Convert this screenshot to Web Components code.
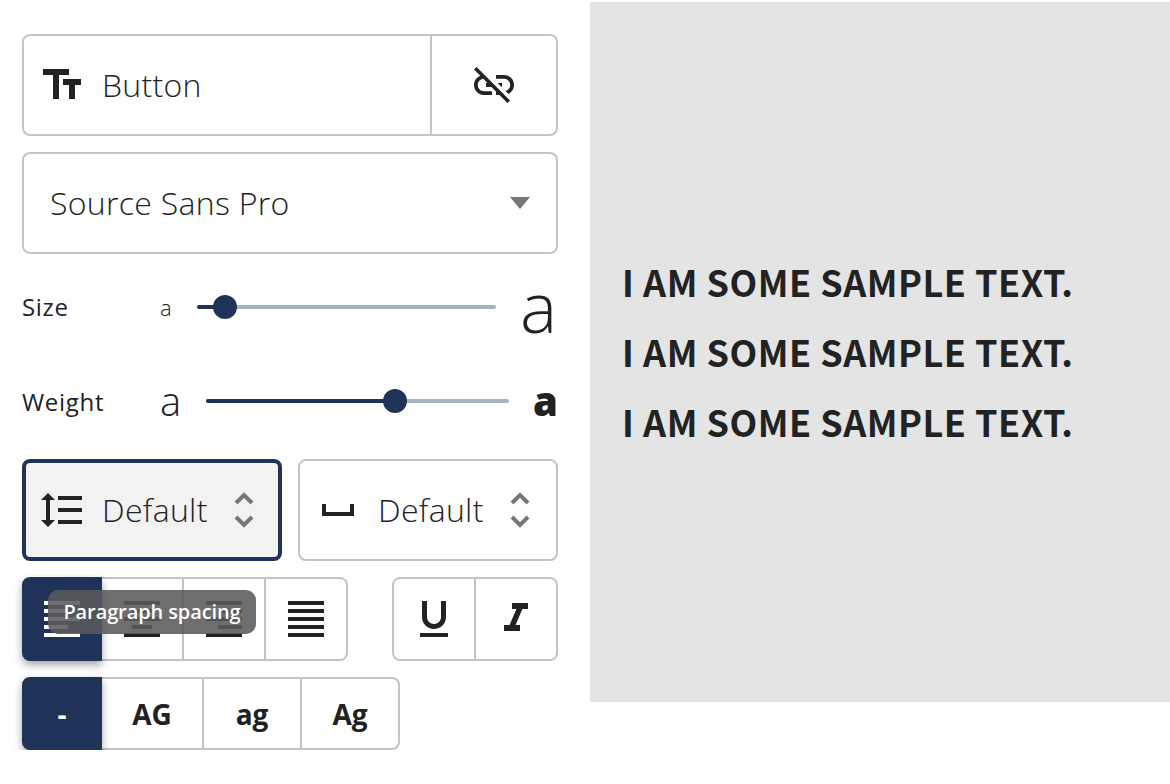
<!DOCTYPE html>
<html>
<head>
<meta charset="utf-8">
<title>Text settings</title>
<style>
    html, body { margin: 0; background: #fff; }
    body {
        display: flex;
        align-items: flex-start;
        font-family: "Open Sans", "Liberation Sans", sans-serif;
        color: #222;
    }
</style>
</head>
<body>
<text-panel>
    <field-row height="102">
        <field-cell grow>
            <line-icon name="text" slot="icon"></line-icon>
            Button
        </field-cell>
        <field-cell width="124" center>
            <line-icon name="unlink" slot="icon"></line-icon>
        </field-cell>
    </field-row>

    <font-select>Source Sans Pro</font-select>

    <range-row label="Size" left="37" right="62" value="9.4" height="74">
        <span slot="min" style="font-size:22px;font-weight:300">a</span>
        <span slot="max" style="display:block;font-size:70px;font-weight:300;line-height:68px;margin:0 1px 3px 0">a</span>
    </range-row>
    <range-row label="Weight" left="46" right="49" value="62.4" height="82" style="margin-bottom:1px;--label-lift:0px">
        <span slot="min" style="font-size:40px;font-weight:300">a</span>
        <span slot="max" style="font-size:40px;font-weight:800">a</span>
    </range-row>

    <div style="display:flex;gap:16px">
        <step-field focused>
            <line-icon name="lineheight" slot="icon"></line-icon>
            Default
        </step-field>
        <step-field>
            <line-icon name="space" slot="icon"></line-icon>
            Default
        </step-field>
    </div>

    <div style="display:flex;justify-content:space-between">
        <toggle-group height="84">
            <toggle-btn width="80" active><line-icon name="left"></line-icon></toggle-btn>
            <toggle-btn width="82"><line-icon name="center"></line-icon></toggle-btn>
            <toggle-btn width="82"><line-icon name="right"></line-icon></toggle-btn>
            <toggle-btn width="82"><line-icon name="justify"></line-icon></toggle-btn>
            <hint-bubble>Paragraph spacing</hint-bubble>
        </toggle-group>
        <toggle-group height="84">
            <toggle-btn width="84"><line-icon name="underline"></line-icon></toggle-btn>
            <toggle-btn width="82"><line-icon name="italic"></line-icon></toggle-btn>
        </toggle-group>
    </div>

    <toggle-group height="73">
        <toggle-btn width="80" active>-</toggle-btn>
        <toggle-btn width="102">AG</toggle-btn>
        <toggle-btn width="98">ag</toggle-btn>
        <toggle-btn width="98">Ag</toggle-btn>
    </toggle-group>
</text-panel>

<sample-preview>
    <div>I AM SOME SAMPLE TEXT.</div>
    <div>I AM SOME SAMPLE TEXT.</div>
    <div>I AM SOME SAMPLE TEXT.</div>
</sample-preview>

<script>
(function (){
    const BORDER = "#c4c4c4";
    const NAVY = "#1e3357";

    const ICONS = {
        text: "M2.5 4v3h5v12h3V7h5V4h-13zm19 5h-9v3h3v7h3v-7h3V9z",
        unlink: "M17 7h-4v1.9h4c1.71 0 3.1 1.39 3.1 3.1 0 1.43-.98 2.63-2.31 2.98l1.46 1.46C20.88 15.61 22 13.95 22 12c0-2.76-2.24-5-5-5zm-1 4h-2.19l2 2H16zM2 4.27l3.11 3.11C3.29 8.12 2 9.91 2 12c0 2.76 2.24 5 5 5h4v-1.9H7c-1.71 0-3.1-1.39-3.1-3.1 0-1.59 1.21-2.9 2.76-3.07L8.73 11H8v2h2.73L13 15.27V17h1.73l4.01 4L20 19.74 3.27 3 2 4.27z",
        lineheight: "M6 7h2.5L5 3.5 1.5 7H4v10H1.5L5 20.5 8.5 17H6V7zm4-2v2h12V5H10zm0 14h12v-2H10v2zm0-6h12v-2H10v2z",
        space: "M18 9v4H6V9H4v6h16V9z",
        left: "M15 15H3v2h12v-2zm0-8H3v2h12V7zM3 13h18v-2H3v2zm0 8h18v-2H3v2zM3 3v2h18V3H3z",
        center: "M7 15v2h10v-2H7zm-4 6h18v-2H3v2zm0-8h18v-2H3v2zm4-6v2h10V7H7zM3 3v2h18V3H3z",
        right: "M3 21h18v-2H3v2zm6-4h12v-2H9v2zm-6-4h18v-2H3v2zm6-4h12V7H9v2zM3 3v2h18V3H3z",
        justify: "M3 21h18v-2H3v2zm0-4h18v-2H3v2zm0-4h18v-2H3v2zm0-4h18V7H3v2zm0-6v2h18V3H3z",
        underline: "M12 17c3.31 0 6-2.69 6-6V3h-2.5v8c0 1.93-1.57 3.5-3.5 3.5S8.5 12.93 8.5 11V3H6v8c0 3.31 2.69 6 6 6zm-7 2v2h14v-2H5z",
        italic: "M10 4v3h2.21l-3.42 8H6v3h8v-3h-2.21l3.42-8H18V4z"
    };

    function define(name, markup, extra) {
        const template = document.createElement("template");
        template.innerHTML = markup;
        class Element extends HTMLElement {
            constructor() {
                super();
                this.attachShadow({ mode: "open" });
                this.shadowRoot.appendChild(template.content.cloneNode(true));
            }
            connectedCallback() {
                if(extra) extra.call(this);
            }
        }
        customElements.define(name, Element);
    }

    define("text-panel", `
    <style>
        :host {
            display: flex;
            flex-direction: column;
            gap: 16px;
            width: 536px;
            margin: 34px 0 0 22px;
            flex: none;
        }
    </style>
    <slot></slot>`);

    define("line-icon", `
    <style>
        :host { display: block; width: 48px; height: 48px; flex: none; }
        svg { display: block; width: 48px; height: 48px; fill: currentColor; }
    </style>
    <svg viewBox="0 0 24 24"><path></path></svg>`, function () {
        this.shadowRoot.querySelector("path").setAttribute("d", ICONS[this.getAttribute("name")]);
    });

    define("field-row", `
    <style>
        :host {
            display: flex;
            box-sizing: border-box;
            border: 2px solid ${BORDER};
            border-radius: 8px;
            background: #fff;
        }
    </style>
    <slot></slot>`, function () {
        this.style.height = this.getAttribute("height") + "px";
    });

    define("field-cell", `
    <style>
        :host {
            display: flex;
            align-items: center;
            box-sizing: border-box;
            font-size: 32px;
            font-weight: 300;
            letter-spacing: .3px;
            padding-left: 14px;
        }
        :host([grow]) { flex: 1; border-right: 2px solid ${BORDER}; }
        :host([center]) { justify-content: center; padding-left: 0; }
        slot[name="icon"]::slotted(*) { margin-right: 16px; }
        :host([center]) slot[name="icon"]::slotted(*) { margin-right: 0; }
        .label { margin-bottom: 2px; }
    </style>
    <slot name="icon"></slot><span class="label"><slot></slot></span>`, function () {
        if(this.hasAttribute("width")) this.style.width = this.getAttribute("width") + "px";
    });

    define("font-select", `
    <style>
        :host {
            display: flex;
            align-items: center;
            justify-content: space-between;
            box-sizing: border-box;
            height: 102px;
            padding: 0 26px;
            border: 2px solid ${BORDER};
            border-radius: 8px;
            font-size: 32px;
            font-weight: 300;
            letter-spacing: .3px;
        }
        .label { margin-bottom: 2px; }
        .caret {
            width: 0;
            height: 0;
            border-left: 10px solid transparent;
            border-right: 10px solid transparent;
            border-top: 12px solid #777;
        }
    </style>
    <span class="label"><slot></slot></span><span class="caret"></span>`);

    define("range-row", `
    <style>
        :host {
            display: grid;
            align-items: center;
            font-size: 24px;
        }
        .label { font-size: 24px; letter-spacing: .7px; margin-bottom: var(--label-lift, 2px); }
        .min { line-height: 1; }
        .max { text-align: right; line-height: 1; }
        .track {
            position: relative;
            height: 4px;
            border-radius: 2px;
            background: #a8b1c1;
        }
        .fill {
            height: 100%;
            border-radius: 2px;
            background: ${NAVY};
        }
        .thumb {
            position: absolute;
            top: -10px;
            width: 24px;
            height: 24px;
            margin-left: -12px;
            border-radius: 50%;
            background: ${NAVY};
        }
    </style>
    <span class="label"></span>
    <span class="min"><slot name="min"></slot></span>
    <div class="track"><div class="fill"></div><div class="thumb"></div></div>
    <span class="max"><slot name="max"></slot></span>`, function () {
        const value = this.getAttribute("value") + "%";
        const root = this.shadowRoot;
        root.querySelector(".label").textContent = this.getAttribute("label");
        root.querySelector(".fill").style.width = value;
        root.querySelector(".thumb").style.left = value;
        this.style.height = this.getAttribute("height") + "px";
        this.style.gridTemplateColumns = `138px ${this.getAttribute("left")}px 1fr ${this.getAttribute("right")}px`;
    });

    define("step-field", `
    <style>
        :host {
            display: flex;
            align-items: center;
            box-sizing: border-box;
            width: 260px;
            height: 102px;
            padding: 0 26px 0 14px;
            border: 2px solid ${BORDER};
            border-radius: 8px;
            font-size: 32px;
            font-weight: 300;
            letter-spacing: .3px;
        }
        :host([focused]) {
            border: 4px solid ${NAVY};
            background: #f2f2f2;
            padding-left: 12px;
            padding-right: 24px;
        }
        slot[name="icon"]::slotted(*) { margin-right: 16px; }
        .label { flex: 1; margin-bottom: 2px; }
        svg { display: block; width: 20px; height: 36px; fill: none; stroke: #777; stroke-width: 4; }
    </style>
    <slot name="icon"></slot>
    <span class="label"><slot></slot></span>
    <svg viewBox="0 0 20 36"><path d="M2 11l8-8 8 8M2 25l8 8 8-8"></path></svg>`);

    define("toggle-group", `
    <style>
        :host { display: inline-flex; position: relative; align-self: flex-start; }
        ::slotted(toggle-btn:first-of-type) {
            border-left: 2px solid ${BORDER};
            border-radius: 8px 0 0 8px;
        }
        ::slotted(toggle-btn:last-of-type) { border-radius: 0 8px 8px 0; }
        ::slotted(toggle-btn[active]) { border-color: ${NAVY}; }
    </style>
    <slot></slot>`, function () {
        this.style.height = this.getAttribute("height") + "px";
    });

    define("toggle-btn", `
    <style>
        :host {
            display: flex;
            align-items: center;
            justify-content: center;
            box-sizing: border-box;
            height: 100%;
            border: 2px solid ${BORDER};
            border-left: 0;
            background: #fff;
            font-size: 28px;
            font-weight: 700;
        }
        :host([active]) {
            position: relative;
            background: ${NAVY};
            color: #fff;
            box-shadow: 0 4px 8px rgba(0, 0, 0, .35);
        }
    </style>
    <slot></slot>`, function () {
        this.style.width = this.getAttribute("width") + "px";
    });

    define("hint-bubble", `
    <style>
        :host {
            position: absolute;
            left: 26px;
            top: 13px;
            box-sizing: border-box;
            width: 208px;
            height: 44px;
            display: flex;
            align-items: center;
            justify-content: center;
            padding-bottom: 2px;
            border-radius: 10px;
            background: rgba(90, 90, 90, .88);
            color: #fff;
            font-size: 20px;
            font-weight: 600;
            letter-spacing: -.1px;
            white-space: nowrap;
        }
    </style>
    <slot></slot>`);

    define("sample-preview", `
    <style>
        :host {
            display: flex;
            flex-direction: column;
            justify-content: center;
            box-sizing: border-box;
            width: 580px;
            height: 700px;
            margin: 2px 0 0 32px;
            padding: 0 0 2px 32px;
            background: #e4e4e4;
            color: #222;
            font-family: "Noto Sans CJK SC", "Open Sans", sans-serif;
            font-size: 36px;
            font-weight: 700;
            letter-spacing: .5px;
            line-height: 70px;
            white-space: nowrap;
        }
    </style>
    <slot></slot>`);
})();
</script>
</body>
</html>
